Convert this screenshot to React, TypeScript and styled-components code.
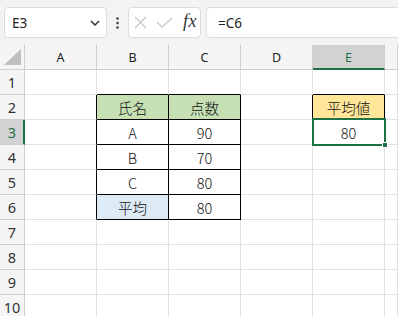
import styled, { createGlobalStyle } from "styled-components";

const GlobalStyle = createGlobalStyle`
  html, body {
    margin: 0;
    padding: 0;
    background: #ffffff;
    overflow: hidden;
  }
  * {
    box-sizing: border-box;
  }
`;

const GREEN = "#1e7145";
const GRID = "#e1e1e1";
const HEAD_LINE = "#cfcfcf";

const Page = styled.div`
  width: 398px;
  height: 316px;
  overflow: hidden;
  font-family: "Noto Sans", "Liberation Sans", sans-serif;
`;

const Toolbar = styled.div`
  height: 45px;
  background: #f3f3f3;
  display: flex;
  align-items: center;
  padding-left: 4px;
`;

const NameBox = styled.div`
  width: 103px;
  height: 31px;
  background: #ffffff;
  border: 1px solid #dcdcdc;
  border-radius: 4px;
  display: flex;
  align-items: center;
  justify-content: space-between;
  padding: 0 6px 0 7px;
  font-size: 13.5px;
  color: #222;
`;

const Dots = styled.div`
  width: 21px;
  display: flex;
  justify-content: center;
`;

const ActionBox = styled.div`
  width: 73px;
  height: 31px;
  margin-right: 5px;
  background: #ffffff;
  border: 1px solid #dcdcdc;
  border-radius: 4px;
  display: flex;
  align-items: center;
  padding-left: 5px;
  gap: 9px;
`;

const Fx = styled.span`
  font-family: "Liberation Serif", serif;
  font-style: italic;
  font-size: 18px;
  color: #333;
  margin-left: 1px;
  margin-top: -2px;
  letter-spacing: 0.5px;
`;

const FormulaInput = styled.div`
  flex: 1;
  height: 31px;
  margin-right: -6px;
  background: #ffffff;
  border: 1px solid #dcdcdc;
  border-radius: 4px;
  display: flex;
  align-items: center;
  padding-left: 11px;
  font-size: 13.5px;
  color: #222;
`;

const Sheet = styled.div`
  display: grid;
  grid-template-columns: 25px repeat(5, 72px) 1fr;
  grid-auto-rows: 25px;
`;

const Corner = styled.div`
  background: #f5f5f5;
  border-right: 1px solid ${HEAD_LINE};
  border-bottom: 1px solid ${HEAD_LINE};
  display: flex;
  align-items: flex-end;
  justify-content: flex-end;
  padding: 0 3px 4px 0;
`;

const ColHead = styled.div<{ $active?: boolean }>`
  background: ${(p) => (p.$active ? "#d2d2d2" : "#f5f5f5")};
  border-right: 1px solid ${HEAD_LINE};
  border-bottom: ${(p) => (p.$active ? `2px solid ${GREEN}` : `1px solid ${HEAD_LINE}`)};
  display: flex;
  align-items: center;
  justify-content: center;
  font-size: 12.5px;
  color: ${(p) => (p.$active ? GREEN : "#222")};
  padding-top: ${(p) => (p.$active ? "1px" : "0")};
`;

const RowHead = styled.div<{ $active?: boolean }>`
  background: ${(p) => (p.$active ? "#d2d2d2" : "#f5f5f5")};
  border-right: ${(p) => (p.$active ? `2px solid ${GREEN}` : `1px solid ${HEAD_LINE}`)};
  border-bottom: 1px solid ${HEAD_LINE};
  display: flex;
  align-items: center;
  justify-content: center;
  font-size: 14.5px;
  color: ${(p) => (p.$active ? GREEN : "#333")};
  padding-left: ${(p) => (p.$active ? "1px" : "0")};
`;

const Cell = styled.div<{ $bg?: string; $rb?: boolean; $bb?: boolean }>`
  position: relative;
  background: ${(p) => p.$bg ?? "#ffffff"};
  border-right: 1px solid ${(p) => (p.$rb ? "#000" : GRID)};
  border-bottom: 1px solid ${(p) => (p.$bb ? "#000" : GRID)};
  display: flex;
  align-items: center;
  justify-content: center;
  font-family: "Noto Sans CJK JP", "Noto Sans", sans-serif;
  font-weight: 300;
  font-size: 14.5px;
  color: #111;
  padding-top: 1px;
`;

const Selection = styled.div`
  position: absolute;
  z-index: 2;
  top: -2px;
  left: -1px;
  right: -2px;
  bottom: -2px;
  border: 2px solid ${GREEN};
  pointer-events: none;
`;

const Handle = styled.div`
  position: absolute;
  right: -4px;
  bottom: -4px;
  width: 6px;
  height: 6px;
  background: ${GREEN};
  border: 1px solid #ffffff;
`;

type CellSpec = { text?: string; bg?: string; rb?: boolean; bb?: boolean; sel?: boolean };

const LIGHT_GREEN = "#c6e0b4";
const YELLOW = "#ffe699";
const LIGHT_BLUE = "#ddebf7";

const columns = ["A", "B", "C", "D", "E", ""];

const data: Record<number, Record<string, CellSpec>> = {
  1: { B: { bb: true }, C: { bb: true }, E: { bb: true } },
  2: {
    A: { rb: true },
    B: { text: "氏名", bg: LIGHT_GREEN, rb: true, bb: true },
    C: { text: "点数", bg: LIGHT_GREEN, rb: true, bb: true },
    D: { rb: true },
    E: { text: "平均値", bg: YELLOW, rb: true, bb: true },
  },
  3: {
    A: { rb: true },
    B: { text: "A", rb: true, bb: true },
    C: { text: "90", rb: true, bb: true },
    E: { text: "80", sel: true },
  },
  4: { A: { rb: true }, B: { text: "B", rb: true, bb: true }, C: { text: "70", rb: true, bb: true } },
  5: { A: { rb: true }, B: { text: "C", rb: true, bb: true }, C: { text: "80", rb: true, bb: true } },
  6: {
    A: { rb: true },
    B: { text: "平均", bg: LIGHT_BLUE, rb: true, bb: true },
    C: { text: "80", rb: true, bb: true },
  },
};

const rows = [1, 2, 3, 4, 5, 6, 7, 8, 9, 10];

function ChevronIcon() {
  return (
    <svg width="10" height="6" viewBox="0 0 10 6">
      <path d="M1 1 L5 5 L9 1" fill="none" stroke="#333" strokeWidth="1.5" />
    </svg>
  );
}

function DotsIcon() {
  return (
    <svg width="3" height="12" viewBox="0 0 3 12">
      <circle cx="1.5" cy="1.5" r="1.3" fill="#444" />
      <circle cx="1.5" cy="6" r="1.3" fill="#444" />
      <circle cx="1.5" cy="10.5" r="1.3" fill="#444" />
    </svg>
  );
}

function CrossIcon() {
  return (
    <svg width="13" height="13" viewBox="0 0 13 13">
      <path d="M1 1 L12 12 M12 1 L1 12" stroke="#c4c4c4" strokeWidth="1.1" fill="none" />
    </svg>
  );
}

function CheckIcon() {
  return (
    <svg width="17" height="11" viewBox="0 0 17 11">
      <path d="M1 5 L6 10 L16 1" stroke="#c4c4c4" strokeWidth="1.1" fill="none" />
    </svg>
  );
}

function CornerTriangle() {
  return (
    <svg width="17" height="16" viewBox="0 0 17 16">
      <path d="M0 16 L17 0 L17 16 Z" fill="#bfbfbf" />
    </svg>
  );
}

export default function App() {
  return (
    <Page>
      <GlobalStyle />
      <Toolbar>
        <NameBox>
          <span>E3</span>
          <ChevronIcon />
        </NameBox>
        <Dots>
          <DotsIcon />
        </Dots>
        <ActionBox>
          <CrossIcon />
          <CheckIcon />
          <Fx>fx</Fx>
        </ActionBox>
        <FormulaInput>=C6</FormulaInput>
      </Toolbar>
      <Sheet>
        <Corner>
          <CornerTriangle />
        </Corner>
        {columns.map((c, i) => (
          <ColHead key={i} $active={c === "E"}>
            {c}
          </ColHead>
        ))}
        {rows.map((r) => (
          <>
            <RowHead key={`h${r}`} $active={r === 3}>
              {r}
            </RowHead>
            {columns.map((c, i) => {
              const spec = data[r]?.[c] ?? {};
              return (
                <Cell key={`${r}-${i}`} $bg={spec.bg} $rb={spec.rb} $bb={spec.bb}>
                  {spec.text}
                  {spec.sel && (
                    <Selection>
                      <Handle />
                    </Selection>
                  )}
                </Cell>
              );
            })}
          </>
        ))}
      </Sheet>
    </Page>
  );
}
